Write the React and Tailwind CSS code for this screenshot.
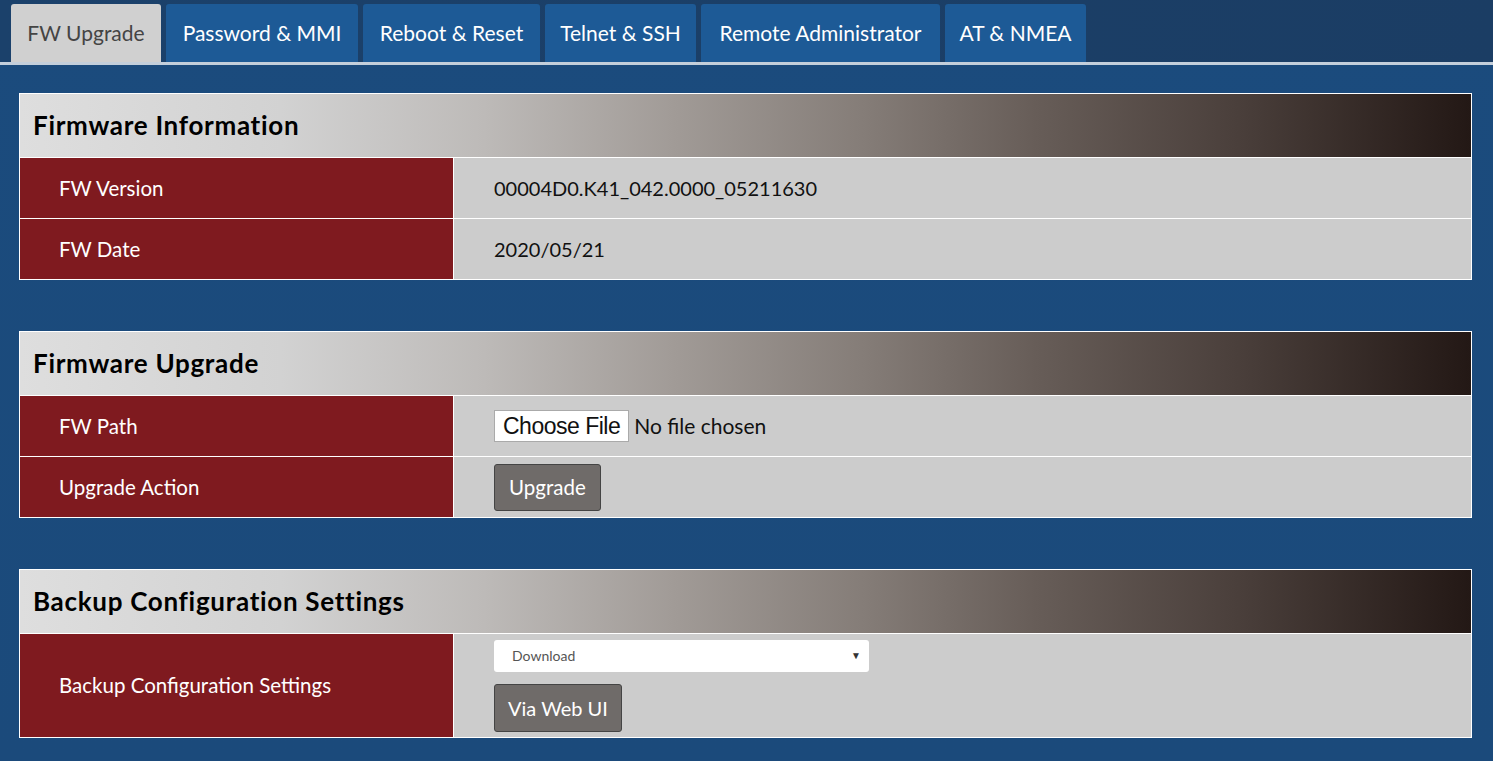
import React from "react";

const tabs = [
  { label: "FW Upgrade", w: "w-[150px]" },
  { label: "Password & MMI", w: "w-[192px]" },
  { label: "Reboot & Reset", w: "w-[177px]" },
  { label: "Telnet & SSH", w: "w-[151px]" },
  { label: "Remote Administrator", w: "w-[239px]" },
  { label: "AT & NMEA", w: "w-[141px]" },
];

function Panel({ title, children }) {
  return (
    <div className="border border-white bg-[#cccccc]">
      <div className="h-[63px] flex items-center pl-[13px] bg-[linear-gradient(to_right,#dedede_0%,#d2d2d2_18%,#bdbab8_32%,#a19b97_45%,#857d78_58%,#675d58_70%,#4a3f3b_84%,#231815_100%)]">
        <h2 className="text-[26px] font-bold tracking-[0.7px] text-black">{title}</h2>
      </div>
      {children}
    </div>
  );
}

function Row({ label, children, tall }) {
  return (
    <div className={"flex border-t border-white " + (tall ? "h-[104px]" : "h-[61px]")}>
      <div className="w-[434px] shrink-0 bg-[#7f1a1f] border-r border-white flex items-center pl-[39px] text-[20.5px] text-white">
        {label}
      </div>
      <div className="flex-1 flex items-center pl-[40px] text-[20px] text-[#111]">
        {children}
      </div>
    </div>
  );
}

export default function App() {
  return (
    <div className="min-h-screen bg-[linear-gradient(to_bottom,#1b4b7d,#1b4a7b)] font-['Lato','Open_Sans',sans-serif] pb-6">
      <div className="bg-[linear-gradient(to_right,#1b416b,#1b3d64)] pt-[4px] pl-[11px] flex gap-[5px] border-b-[3px] border-[#c4cfdb]">
        {tabs.map((t, i) => (
          <div
            key={t.label}
            className={
              t.w +
              " h-[58px] flex items-center justify-center whitespace-nowrap text-[21px] rounded-t-[3px] " +
              (i === 0
                ? "bg-[#d0d0d0] text-[#444]"
                : "bg-[#1d5a96] text-white")
            }
          >
            {t.label}
          </div>
        ))}
      </div>

      <div className="pl-[19px] pr-[21px] pt-[28px] flex flex-col gap-[51px]">
        <Panel title="Firmware Information">
          <Row label="FW Version">00004D0.K41_042.0000_05211630</Row>
          <Row label="FW Date">2020/05/21</Row>
        </Panel>

        <Panel title="Firmware Upgrade">
          <Row label="FW Path">
            <span className="h-[32px] px-[8px] bg-white border border-[#aaa] flex items-center text-[23px] font-['Liberation_Sans',sans-serif] tracking-[-0.5px]">
              Choose File
            </span>
            <span className="ml-[5px] text-[21px]">No file chosen</span>
          </Row>
          <Row label="Upgrade Action">
            <button className="h-[47px] px-[14px] bg-[#6f6b69] border border-[#444] rounded-[3px] text-white text-[20.5px]">
              Upgrade
            </button>
          </Row>
        </Panel>

        <Panel title="Backup Configuration Settings">
          <Row label="Backup Configuration Settings" tall>
            <div className="flex flex-col gap-[12px]">
              <div className="w-[375px] h-[32px] bg-white rounded-[3px] flex items-center justify-between pl-[18px] pr-[8px] text-[14px] text-[#555]">
                <span>Download</span>
                <span className="text-[10px] text-[#333]">▼</span>
              </div>
              <button className="self-start h-[48px] px-[13px] bg-[#6f6b69] border border-[#444] rounded-[3px] text-white text-[20px]">
                Via Web UI
              </button>
            </div>
          </Row>
        </Panel>
      </div>
    </div>
  );
}
